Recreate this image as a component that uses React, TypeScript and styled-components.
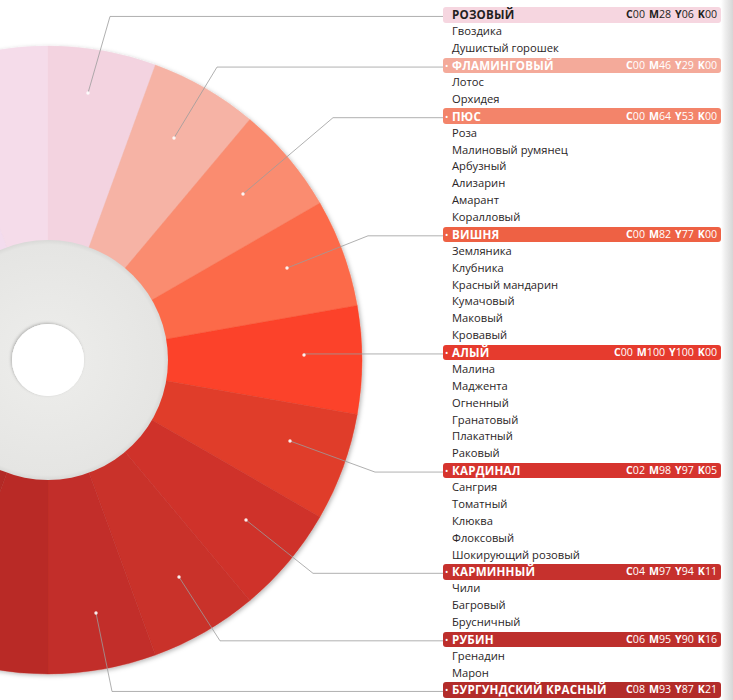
import React from 'react';
import styled, { createGlobalStyle } from 'styled-components';

const ROW = 16.875;
const LIST_TOP = 6.5;
const CX = 48;
const CY = 360;
const R_OUT = 314;
const R_DISK = 120;
const R_HOLE = 36;

const GlobalStyle = createGlobalStyle`
  html, body { margin: 0; padding: 0; background: #fff; }
  body { font-family: "Open Sans", "Noto Sans", sans-serif; color: #231f20; }
`;

const Page = styled.div`
  display: flex;
  width: 733px;
  height: 700px;
  overflow: hidden;
  background: #fff;
`;

const Wheel = styled.svg`
  flex: 0 0 443px;
  height: 700px;
  display: block;
`;

const List = styled.ul`
  flex: 0 0 278px;
  margin: 0;
  padding: ${LIST_TOP}px 0 0;
  list-style: none;
`;

const Name = styled.li`
  height: ${ROW}px;
  line-height: ${ROW}px;
  padding-left: 9px;
  font-size: 11.2px;
  color: #2a2526;
  white-space: nowrap;
`;

const Header = styled.li`
  height: ${ROW}px;
  display: flex;
  align-items: center;
`;

const Bar = styled.div<{ $bg: string; $fg: string }>`
  flex: 1;
  height: 15.5px;
  display: flex;
  align-items: center;
  padding: 0 4px 0 2px;
  border-radius: 3px;
  background: ${p => p.$bg};
  color: ${p => p.$fg};
  white-space: nowrap;
`;

const Bullet = styled.span<{ $hide?: boolean }>`
  width: 7px;
  font-size: 9px;
  line-height: 15px;
  visibility: ${p => (p.$hide ? 'hidden' : 'visible')};
`;

const Title = styled.span`
  flex: 1;
  font-size: 11.6px;
  font-weight: 700;
  letter-spacing: 0.2px;
  text-transform: uppercase;
  line-height: 15px;
`;

const Cmyk = styled.span`
  font-size: 10.6px;
  line-height: 15px;
`;

const Ink = styled.b`
  font-weight: 700;
  margin-left: 4px;
  &:first-child { margin-left: 0; }
`;

const Gutter = styled.div`
  flex: 1;
  background: linear-gradient(to right, #fff 0%, #efefef 35%, #d6d6d6 100%);
`;

type Group = {
  title: string;
  cmyk: number[];
  bar: string;
  fg: string;
  dot: [number, number];
  elbowX: number;
  names: string[];
};

const groups: Group[] = [
  { title: 'Розовый', cmyk: [0, 28, 6, 0], bar: '#f6d6e0', fg: '#231f20', dot: [88, 93], elbowX: 110, names: ['Гвоздика', 'Душистый горошек'] },
  { title: 'Фламинговый', cmyk: [0, 46, 29, 0], bar: '#f4aa9a', fg: '#fff', dot: [174, 138], elbowX: 217, names: ['Лотос', 'Орхидея'] },
  { title: 'Пюс', cmyk: [0, 64, 53, 0], bar: '#f3846a', fg: '#fff', dot: [243, 194], elbowX: 333, names: ['Роза', 'Малиновый румянец', 'Арбузный', 'Ализарин', 'Амарант', 'Коралловый'] },
  { title: 'Вишня', cmyk: [0, 82, 77, 0], bar: '#ee6144', fg: '#fff', dot: [287, 268], elbowX: 368, names: ['Земляника', 'Клубника', 'Красный мандарин', 'Кумачовый', 'Маковый', 'Кровавый'] },
  { title: 'Алый', cmyk: [0, 100, 100, 0], bar: '#e63b2e', fg: '#fff', dot: [304, 355], elbowX: 304, names: ['Малина', 'Маджента', 'Огненный', 'Гранатовый', 'Плакатный', 'Раковый'] },
  { title: 'Кардинал', cmyk: [2, 98, 97, 5], bar: '#d6342e', fg: '#fff', dot: [290, 441], elbowX: 375, names: ['Сангрия', 'Томатный', 'Клюква', 'Флоксовый', 'Шокирующий розовый'] },
  { title: 'Карминный', cmyk: [4, 97, 94, 11], bar: '#c6312d', fg: '#fff', dot: [246, 520], elbowX: 313, names: ['Чили', 'Багровый', 'Брусничный'] },
  { title: 'Рубин', cmyk: [6, 95, 90, 16], bar: '#bd2f2c', fg: '#fff', dot: [179, 577], elbowX: 220, names: ['Гренадин', 'Марон'] },
  { title: 'Бургундский красный', cmyk: [8, 93, 87, 21], bar: '#b32c2a', fg: '#fff', dot: [96, 613], elbowX: 112, names: [] },
];

// wedge colours, 20° each, clockwise from straight up
const wedges = [
  { from: -40, color: '#f3dcee' },
  { from: -20, color: '#f5dcea' },
  { from: 0, color: '#f3d3e0' },
  { from: 20, color: '#f6b3a5' },
  { from: 40, color: '#fa8c70' },
  { from: 60, color: '#fc6a48' },
  { from: 80, color: '#fc4329' },
  { from: 100, color: '#e03d2b' },
  { from: 120, color: '#cf3229' },
  { from: 140, color: '#c9302a' },
  { from: 160, color: '#c22e29' },
  { from: 180, color: '#b92b27' },
  { from: 200, color: '#b22925' },
];

const pt = (deg: number, r: number) => {
  const a = (deg * Math.PI) / 180;
  return [CX + r * Math.sin(a), CY - r * Math.cos(a)];
};

const wedgePath = (from: number, to: number) => {
  const [x0, y0] = pt(from, R_OUT);
  const [x1, y1] = pt(to, R_OUT);
  return `M${CX} ${CY} L${x0} ${y0} A${R_OUT} ${R_OUT} 0 0 1 ${x1} ${y1} Z`;
};

const pad = (n: number) => (n < 10 ? `0${n}` : `${n}`);

// index of each header row in the list, for the leader lines
const headerRows: number[] = [];
groups.reduce((row, g) => {
  headerRows.push(row);
  return row + 1 + g.names.length;
}, 0);

const lineY = (row: number) => LIST_TOP + row * ROW + ROW / 2 + 1.5;

const ColorWheel = () => (
  <Wheel viewBox="0 0 443 700">
    <defs>
      <filter id="wheelShadow" x="-20%" y="-20%" width="140%" height="140%">
        <feDropShadow dx="1.5" dy="1.5" stdDeviation="2" floodColor="#000" floodOpacity="0.28" />
      </filter>
      <radialGradient id="disk" cx="0.5" cy="0.5" r="0.5">
        <stop offset="0.3" stopColor="#ebebe9" />
        <stop offset="0.96" stopColor="#e5e5e3" />
        <stop offset="1" stopColor="#d9d9d7" />
      </radialGradient>
      <filter id="holeShadow" x="-30%" y="-30%" width="160%" height="160%">
        <feDropShadow dx="-1" dy="-1" stdDeviation="1.5" floodColor="#000" floodOpacity="0.25" />
      </filter>
    </defs>
    <g filter="url(#wheelShadow)">
      {wedges.map(w => (
        <path key={w.from} d={wedgePath(w.from, w.from + 20)} fill={w.color} stroke={w.color} strokeWidth={0.4} />
      ))}
    </g>
    <circle cx={CX} cy={CY} r={R_DISK} fill="url(#disk)" />
    <circle cx={CX} cy={CY} r={R_HOLE} fill="#fff" filter="url(#holeShadow)" />
    <circle cx={CX} cy={CY} r={R_HOLE} fill="#fff" />
    {groups.map((g, i) => {
      const y = lineY(headerRows[i]);
      return (
        <g key={g.title}>
          <polyline
            points={`${g.dot[0]},${g.dot[1]} ${g.elbowX},${y} 443,${y}`}
            fill="none"
            stroke="#9c9c9c"
            strokeWidth={0.8}
          />
          <circle cx={g.dot[0]} cy={g.dot[1]} r={1.7} fill="#fff" opacity={0.9} />
        </g>
      );
    })}
  </Wheel>
);

const App = () => (
  <Page>
    <GlobalStyle />
    <ColorWheel />
    <List>
      {groups.map((g, i) => (
        <React.Fragment key={g.title}>
          <Header>
            <Bar $bg={g.bar} $fg={g.fg}>
              <Bullet $hide={i === 0}>•</Bullet>
              <Title>{g.title}</Title>
              <Cmyk>
                {['C', 'M', 'Y', 'K'].map((c, k) => (
                  <React.Fragment key={c}>
                    <Ink>{c}</Ink>
                    {pad(g.cmyk[k])}
                  </React.Fragment>
                ))}
              </Cmyk>
            </Bar>
          </Header>
          {g.names.map(n => (
            <Name key={n}>{n}</Name>
          ))}
        </React.Fragment>
      ))}
    </List>
    <Gutter />
  </Page>
);

export default App;
